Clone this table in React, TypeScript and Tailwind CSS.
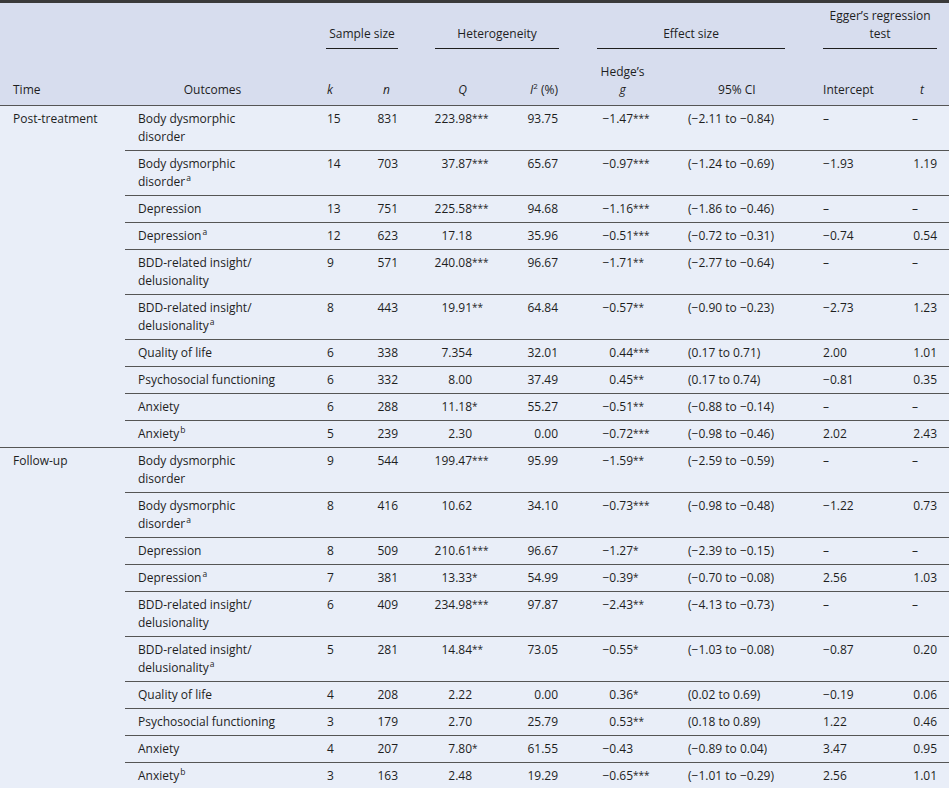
import React from "react";

type Row = {
  o: React.ReactNode;
  k: string;
  n: string;
  q: string;
  qs?: string;
  i2: string;
  g: string;
  gs?: string;
  ci: string;
  ic: string;
  t: string;
};

const Sup = ({ c }: { c: string }) => (
  <sup className="text-[8.5px] top-[-0.5em] ml-[1px]">{c}</sup>
);

const BDD = (
  <>
    Body dysmorphic
    <br />
    disorder
  </>
);
const INS = (
  <>
    BDD-related insight/
    <br />
    delusionality
  </>
);

const post: Row[] = [
  { o: BDD, k: "15", n: "831", q: "223.98", qs: "***", i2: "93.75", g: "−1.47", gs: "***", ci: "(−2.11 to −0.84)", ic: "–", t: "–" },
  { o: <>{BDD}<Sup c="a" /></>, k: "14", n: "703", q: "37.87", qs: "***", i2: "65.67", g: "−0.97", gs: "***", ci: "(−1.24 to −0.69)", ic: "−1.93", t: "1.19" },
  { o: "Depression", k: "13", n: "751", q: "225.58", qs: "***", i2: "94.68", g: "−1.16", gs: "***", ci: "(−1.86 to −0.46)", ic: "–", t: "–" },
  { o: <>Depression<Sup c="a" /></>, k: "12", n: "623", q: "17.18", i2: "35.96", g: "−0.51", gs: "***", ci: "(−0.72 to −0.31)", ic: "−0.74", t: "0.54" },
  { o: INS, k: "9", n: "571", q: "240.08", qs: "***", i2: "96.67", g: "−1.71", gs: "**", ci: "(−2.77 to −0.64)", ic: "–", t: "–" },
  { o: <>{INS}<Sup c="a" /></>, k: "8", n: "443", q: "19.91", qs: "**", i2: "64.84", g: "−0.57", gs: "**", ci: "(−0.90 to −0.23)", ic: "−2.73", t: "1.23" },
  { o: "Quality of life", k: "6", n: "338", q: "7.354", i2: "32.01", g: "0.44", gs: "***", ci: "(0.17 to 0.71)", ic: "2.00", t: "1.01" },
  { o: "Psychosocial functioning", k: "6", n: "332", q: "8.00", i2: "37.49", g: "0.45", gs: "**", ci: "(0.17 to 0.74)", ic: "−0.81", t: "0.35" },
  { o: "Anxiety", k: "6", n: "288", q: "11.18", qs: "*", i2: "55.27", g: "−0.51", gs: "**", ci: "(−0.88 to −0.14)", ic: "–", t: "–" },
  { o: <>Anxiety<Sup c="b" /></>, k: "5", n: "239", q: "2.30", i2: "0.00", g: "−0.72", gs: "***", ci: "(−0.98 to −0.46)", ic: "2.02", t: "2.43" },
];

const follow: Row[] = [
  { o: BDD, k: "9", n: "544", q: "199.47", qs: "***", i2: "95.99", g: "−1.59", gs: "**", ci: "(−2.59 to −0.59)", ic: "–", t: "–" },
  { o: <>{BDD}<Sup c="a" /></>, k: "8", n: "416", q: "10.62", i2: "34.10", g: "−0.73", gs: "***", ci: "(−0.98 to −0.48)", ic: "−1.22", t: "0.73" },
  { o: "Depression", k: "8", n: "509", q: "210.61", qs: "***", i2: "96.67", g: "−1.27", gs: "*", ci: "(−2.39 to −0.15)", ic: "–", t: "–" },
  { o: <>Depression<Sup c="a" /></>, k: "7", n: "381", q: "13.33", qs: "*", i2: "54.99", g: "−0.39", gs: "*", ci: "(−0.70 to −0.08)", ic: "2.56", t: "1.03" },
  { o: INS, k: "6", n: "409", q: "234.98", qs: "***", i2: "97.87", g: "−2.43", gs: "**", ci: "(−4.13 to −0.73)", ic: "–", t: "–" },
  { o: <>{INS}<Sup c="a" /></>, k: "5", n: "281", q: "14.84", qs: "**", i2: "73.05", g: "−0.55", gs: "*", ci: "(−1.03 to −0.08)", ic: "−0.87", t: "0.20" },
  { o: "Quality of life", k: "4", n: "208", q: "2.22", i2: "0.00", g: "0.36", gs: "*", ci: "(0.02 to 0.69)", ic: "−0.19", t: "0.06" },
  { o: "Psychosocial functioning", k: "3", n: "179", q: "2.70", i2: "25.79", g: "0.53", gs: "**", ci: "(0.18 to 0.89)", ic: "1.22", t: "0.46" },
  { o: "Anxiety", k: "4", n: "207", q: "7.80", qs: "*", i2: "61.55", g: "−0.43", ci: "(−0.89 to 0.04)", ic: "3.47", t: "0.95" },
  { o: <>Anxiety<Sup c="b" /></>, k: "3", n: "163", q: "2.48", i2: "19.29", g: "−0.65", gs: "***", ci: "(−1.01 to −0.29)", ic: "2.56", t: "1.01" },
];

const Stars = ({ s }: { s?: string }) =>
  s ? <span className="text-[10px] relative -top-px">{s}</span> : null;

const td = "align-top py-[4px] border-b border-[#555555]";

function Group({ label, rows }: { label: string; rows: Row[] }) {
  return (
    <>
      {rows.map((r, i) => (
        <tr key={i}>
          {i === 0 && (
            <td rowSpan={rows.length} className="align-top pl-[13px] pt-[4px] border-b border-[#555555]">
              {label}
            </td>
          )}
          <td className={`${td} pl-[13px] pr-[37px]`}>{r.o}</td>
          <td className={`${td} pl-[10px]`}>{r.k}</td>
          <td className={`${td} text-right pr-[19px]`}>{r.n}</td>
          <td className={`${td} whitespace-nowrap`}>
            <span className="inline-block w-[55px] text-right">{r.q}</span>
            <Stars s={r.qs} />
          </td>
          <td className={`${td} text-right pr-[2px]`}>{r.i2}</td>
          <td className={`${td} whitespace-nowrap`}>
            <span className="inline-block w-[73px] text-right">{r.g}</span>
            <Stars s={r.gs} />
          </td>
          <td className={`${td} pl-[3px] whitespace-nowrap`}>{r.ci}</td>
          <td className={`${td} pl-[8px]`}>{r.ic}</td>
          <td className={`${td} text-right pr-[12px]`}>
            {r.t === "–" ? <span className="inline-block w-[25px] text-left">–</span> : r.t}
          </td>
        </tr>
      ))}
    </>
  );
}

export default function App() {
  return (
    <div className="w-[949px] bg-[#e9eef8] text-[#1e1e1e] text-[12px] leading-[18px] font-['Open_Sans','Noto_Sans',sans-serif]">
      <table className="w-[949px] table-fixed border-collapse border-t-[3px] border-t-[#3a3a3a] border-b-2 border-b-[#1a1a1a]">
        <colgroup>
          <col className="w-[125px]" />
          <col className="w-[192px]" />
          <col className="w-[40px]" />
          <col className="w-[60px]" />
          <col className="w-[83px]" />
          <col className="w-[60px]" />
          <col className="w-[125px]" />
          <col className="w-[130px]" />
          <col className="w-[65px]" />
          <col className="w-[69px]" />
        </colgroup>
        <thead className="bg-[#d7ddee] font-normal">
          <tr>
            <th rowSpan={2} className="align-bottom text-left font-normal pl-[13px] pb-[6px] border-b border-[#555555]">
              Time
            </th>
            <th rowSpan={2} className="align-bottom text-center font-normal pl-[13px] pr-[30px] pb-[6px] border-b border-[#555555]">
              Outcomes
            </th>
            <th colSpan={2} className="align-bottom font-normal pt-[4px] p-0">
              <div className="ml-[9px] mr-[19px] pb-[5px] border-b border-[#1e1e1e] text-center">Sample size</div>
            </th>
            <th colSpan={2} className="align-bottom font-normal pt-[4px] p-0">
              <div className="ml-[18px] mr-[1px] pb-[5px] border-b border-[#1e1e1e] text-center">Heterogeneity</div>
            </th>
            <th colSpan={2} className="align-bottom font-normal pt-[4px] p-0">
              <div className="ml-[37px] mr-[30px] pb-[5px] border-b border-[#1e1e1e] text-center">Effect size</div>
            </th>
            <th colSpan={2} className="align-bottom font-normal pt-[4px] p-0">
              <div className="ml-[8px] mr-[12px] pb-[5px] border-b border-[#1e1e1e] text-center">
                Egger’s regression
                <br />
                test
              </div>
            </th>
          </tr>
          <tr className="h-[56px]">
            <th className="align-bottom font-normal text-left pl-[10px] pb-[6px] border-b border-[#555555]">
              <i>k</i>
            </th>
            <th className="align-bottom font-normal text-right pr-[27px] pb-[6px] border-b border-[#555555]">
              <i>n</i>
            </th>
            <th className="align-bottom font-normal text-right pr-[33px] pb-[6px] border-b border-[#555555]">
              <i>Q</i>
            </th>
            <th className="align-bottom font-normal text-right pr-[2px] pb-[6px] border-b border-[#555555]">
              <i>I</i>
              <sup className="text-[8px] top-[-0.6em]">2</sup> (%)
            </th>
            <th className="align-bottom font-normal text-center pb-[6px] border-b border-[#555555]">
              Hedge’s
              <br />
              <i>g</i>
            </th>
            <th className="align-bottom font-normal text-left pl-[33px] pb-[6px] border-b border-[#555555]">
              95% CI
            </th>
            <th className="align-bottom font-normal text-left pl-[8px] pb-[6px] border-b border-[#555555]">
              Intercept
            </th>
            <th className="align-bottom font-normal text-right pr-[25px] pb-[6px] border-b border-[#555555]">
              <i>t</i>
            </th>
          </tr>
        </thead>
        <tbody>
          <Group label="Post-treatment" rows={post} />
          <Group label="Follow-up" rows={follow} />
        </tbody>
      </table>
    </div>
  );
}
